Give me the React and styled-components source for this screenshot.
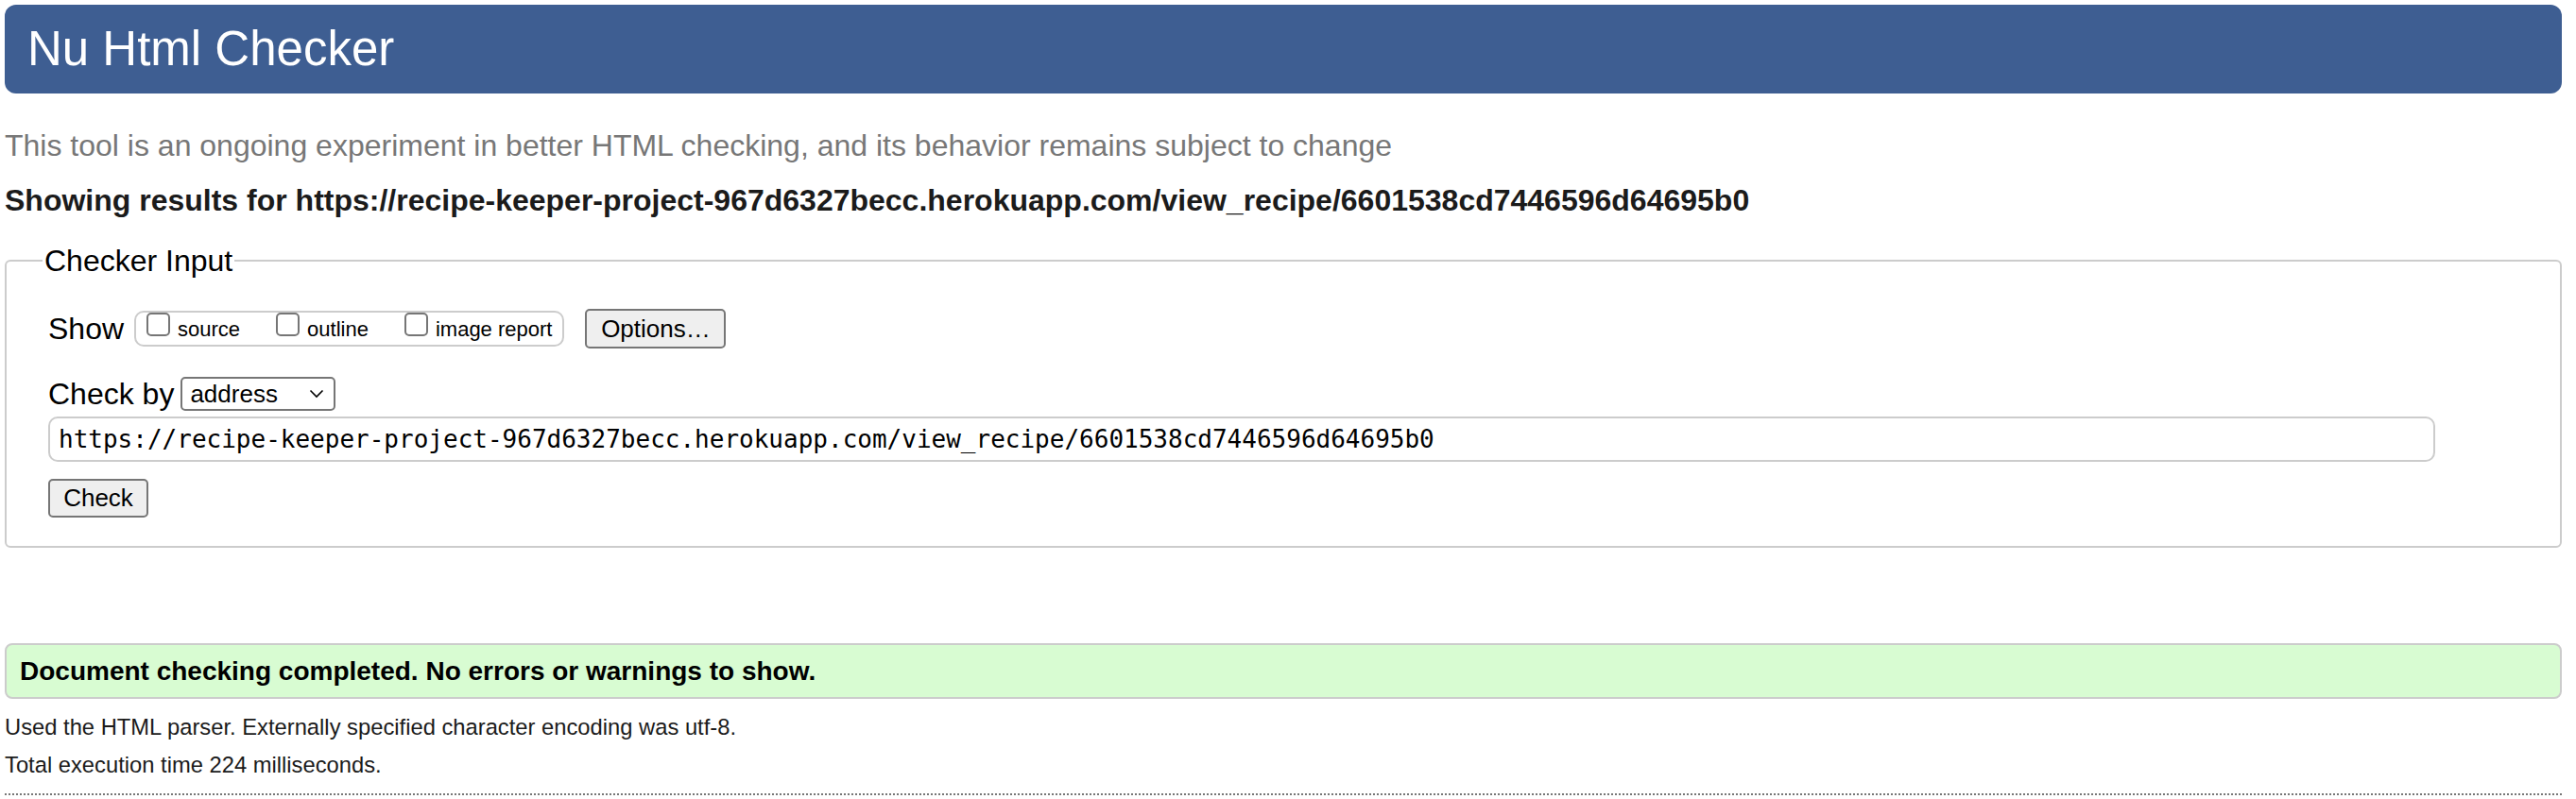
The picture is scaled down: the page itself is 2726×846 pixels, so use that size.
import React from "react";
import styled, { createGlobalStyle } from "styled-components";

const GlobalStyle = createGlobalStyle`
  body {
    margin: 0;
    background: #ffffff;
    font-family: "Liberation Sans", Arial, Helvetica, sans-serif;
    color: #000000;
  }
`;

const Page = styled.div`
  width: 2706px;
  padding: 5px 0 0 5px;
`;

const Header = styled.h1`
  margin: 0;
  height: 94px;
  padding-left: 24px;
  border-radius: 12px;
  background-color: #3e5e92;
  color: #ffffff;
  font-size: 51px;
  font-weight: 400;
  line-height: 94px;
`;

const Intro = styled.p`
  margin: 35px 0 0;
  font-size: 32px;
  line-height: 40px;
  color: #777777;
`;

const ResultsFor = styled.p`
  margin: 18px 0 0;
  font-size: 32px;
  font-weight: 700;
  line-height: 40px;
  color: #1b1b1b;
`;

const Fieldset = styled.fieldset`
  box-sizing: border-box;
  width: 2706px;
  margin: 24px 0 0;
  padding: 31px 0 30px 44px;
  border: 2px solid #cccccc;
  border-radius: 6px;
`;

const Legend = styled.legend`
  margin-left: -6px;
  padding: 0 2px;
  font-size: 32px;
  line-height: 40px;
`;

const Row = styled.div`
  display: flex;
  align-items: center;
  height: ${(p) => p.$height}px;
  margin-top: ${(p) => p.$top || 0}px;
`;

const Label = styled.span`
  font-size: 32px;
  line-height: 40px;
  margin-right: ${(p) => p.$gap}px;
`;

const ShowGroup = styled.div`
  box-sizing: border-box;
  display: flex;
  align-items: baseline;
  height: 38px;
  padding: 0 11px;
  border: 2px solid #cccccc;
  border-radius: 10px;
`;

const Option = styled.label`
  display: flex;
  align-items: baseline;
  margin-right: ${(p) => (p.$last ? 0 : 38)}px;
  font-size: 22px;
  line-height: 34px;
`;

const Box = styled.input.attrs({ type: "checkbox" })`
  appearance: none;
  box-sizing: border-box;
  width: 25px;
  height: 25px;
  margin: 0 8px 0 0;
  border: 2px solid #767676;
  border-radius: 5px;
  background: #ffffff;
`;

const Button = styled.button`
  box-sizing: border-box;
  width: ${(p) => p.$width}px;
  height: ${(p) => p.$height}px;
  margin-left: ${(p) => p.$left || 0}px;
  padding: 0;
  border: 2px solid #767676;
  border-radius: 5px;
  background: #efefef;
  font-family: "Liberation Sans", Arial, Helvetica, sans-serif;
  font-size: 26px;
  color: #000000;
`;

const SelectWrap = styled.div`
  position: relative;
  width: 164px;
  height: 36px;
`;

const Select = styled.select`
  appearance: none;
  box-sizing: border-box;
  width: 100%;
  height: 100%;
  margin: 0;
  padding: 0 0 0 8px;
  border: 2px solid #767676;
  border-radius: 5px;
  background: #ffffff;
  font-family: "Liberation Sans", Arial, Helvetica, sans-serif;
  font-size: 26px;
  color: #000000;
`;

const Chevron = styled.svg`
  position: absolute;
  right: 12px;
  top: 12px;
  pointer-events: none;
`;

const UrlInput = styled.input`
  box-sizing: border-box;
  display: block;
  width: 2526px;
  height: 48px;
  margin: 6px 0 0;
  padding: 0 9px;
  border: 2px solid #cccccc;
  border-radius: 10px;
  font-family: "DejaVu Sans Mono", Menlo, monospace;
  font-size: 26px;
  color: #000000;
`;

const Success = styled.div`
  box-sizing: border-box;
  height: 59px;
  margin-top: 101px;
  padding-left: 14px;
  border: 2px solid #cccccc;
  border-radius: 8px;
  background-color: #d8fcd2;
  font-size: 28px;
  font-weight: 700;
  line-height: 55px;
`;

const Details = styled.div`
  margin-top: 10px;
  font-size: 23.75px;
  line-height: 40px;
  color: #1b1b1b;
`;

const Rule = styled.hr`
  margin: 10px 0 0;
  border: 0;
  border-top: 2px dotted #777777;
`;

const url =
  "https://recipe-keeper-project-967d6327becc.herokuapp.com/view_recipe/6601538cd7446596d64695b0";

const App = () => {
  return (
    <Page>
      <GlobalStyle />
      <Header>Nu Html Checker</Header>
      <Intro>
        This tool is an ongoing experiment in better HTML checking, and its
        behavior remains subject to change
      </Intro>
      <ResultsFor>Showing results for {url}</ResultsFor>
      <Fieldset>
        <Legend>Checker Input</Legend>
        <Row $height={42}>
          <Label $gap={11}>Show</Label>
          <ShowGroup>
            <Option>
              <Box />
              source
            </Option>
            <Option>
              <Box />
              outline
            </Option>
            <Option $last>
              <Box />
              image report
            </Option>
          </ShowGroup>
          <Button type="button" $width={149} $height={42} $left={22}>
            Options…
          </Button>
        </Row>
        <Row $height={36} $top={30}>
          <Label $gap={7}>Check by</Label>
          <SelectWrap>
            <Select defaultValue="address">
              <option value="address">address</option>
              <option value="file">file upload</option>
              <option value="textarea">text input</option>
            </Select>
            <Chevron width="16" height="12" viewBox="0 0 16 12">
              <path d="M1.5 2.5 L8 9 L14.5 2.5" fill="none" stroke="#000" strokeWidth="1.6" />
            </Chevron>
          </SelectWrap>
        </Row>
        <UrlInput type="url" defaultValue={url} />
        <Row $height={41} $top={18}>
          <Button type="submit" $width={106} $height={41}>
            Check
          </Button>
        </Row>
      </Fieldset>
      <Success>Document checking completed. No errors or warnings to show.</Success>
      <Details>
        <div>Used the HTML parser. Externally specified character encoding was utf-8.</div>
        <div>Total execution time 224 milliseconds.</div>
      </Details>
      <Rule />
    </Page>
  );
};

export default App;
